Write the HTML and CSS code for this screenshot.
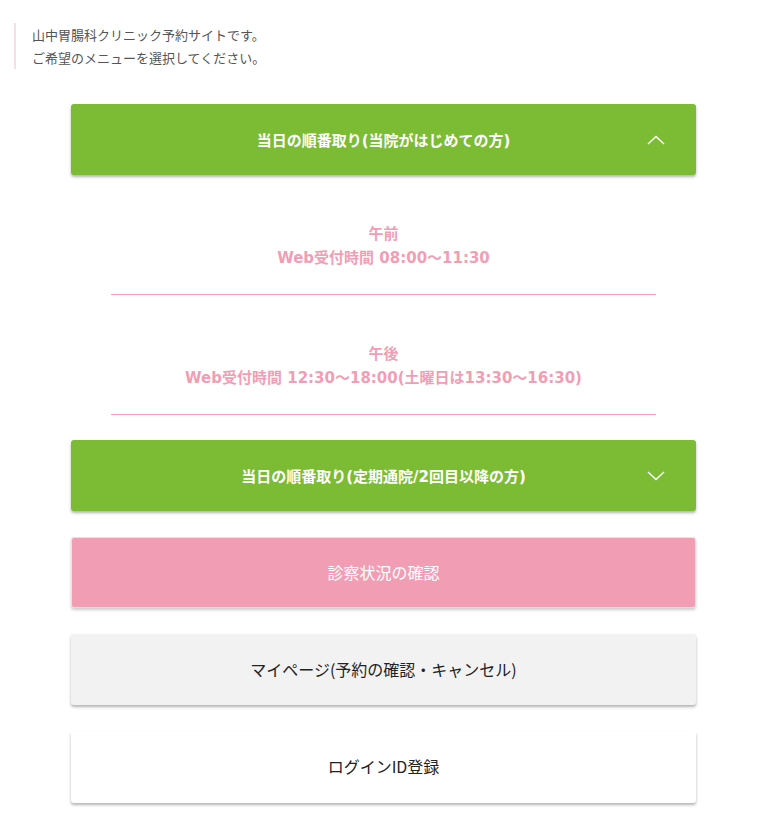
FILE: index.html
```html
<!DOCTYPE html>
<html lang="ja">
<head>
<meta charset="utf-8">
<title>山中胃腸科クリニック予約サイト</title>
<link rel="stylesheet" href="styles.css">
</head>
<body>
<div class="intro">
  <p>山中胃腸科クリニック予約サイトです。</p>
  <p>ご希望のメニューを選択してください。</p>
</div>
<div class="menu">
  <div class="acc-head">
    <span class="acc-title">当日の順番取り(当院がはじめての方)</span>
    <svg class="chev" width="18" height="10" viewBox="0 0 18 10"><polyline points="1,9 9,1.5 17,9" fill="none" stroke="#fff" stroke-width="1.4"/></svg>
  </div>
  <div class="acc-body">
    <div class="slot">
      <p>午前</p>
      <p>Web受付時間 08:00〜11:30</p>
    </div>
    <div class="slot">
      <p>午後</p>
      <p>Web受付時間 12:30〜18:00(土曜日は13:30〜16:30)</p>
    </div>
  </div>
  <div class="acc-head">
    <span class="acc-title">当日の順番取り(定期通院/2回目以降の方)</span>
    <svg class="chev" width="18" height="10" viewBox="0 0 18 10"><polyline points="1,1 9,8.5 17,1" fill="none" stroke="#fff" stroke-width="1.4"/></svg>
  </div>
  <div class="btn btn-pink">診察状況の確認</div>
  <div class="btn btn-gray">マイページ(予約の確認・キャンセル)</div>
  <div class="btn btn-white">ログインID登録</div>
</div>
</body>
</html>
```
FILE: styles.css
```css
* { box-sizing: border-box; }
body {
  margin: 0;
  background: #fff;
  font-family: "Noto Sans CJK JP", "Noto Sans", sans-serif;
  color: #333;
}
p { margin: 0; }
.intro {
  margin: 23px 0 0 14px;
  padding-left: 16px;
  border-left: 2px solid #f5dee7;
  font-size: 13px;
  line-height: 23px;
  color: #555;
}
.intro p { height: 23px; }
.menu {
  margin: 35px 0 30px 71px;
  width: 625px;
  display: flex;
  flex-direction: column;
}
.acc-head {
  position: relative;
  height: 71px;
  padding-bottom: 1px;
  background: #7cbc35;
  border-radius: 3px;
  box-shadow: 0 2px 3px rgba(0,0,0,0.3);
  display: flex;
  align-items: center;
  justify-content: center;
  color: #fff;
  font-family: "DejaVu Sans", "Noto Sans CJK JP", sans-serif;
  font-weight: bold;
  font-size: 15px;
}
.chev {
  position: absolute;
  right: 31px;
  top: 31px;
}
.acc-body {
  padding: 0 40px 25px;
}
.slot {
  padding: 47px 0 24px;
  border-bottom: 1px solid #f19eb5;
  text-align: center;
  color: #f19eb5;
  font-family: "DejaVu Sans", "Noto Sans CJK JP", sans-serif;
  font-weight: bold;
  font-size: 15px;
  line-height: 24px;
}
.slot p { height: 24px; }
.btn {
  height: 71px;
  margin-top: 26px;
  padding-bottom: 2px;
  border-radius: 3px;
  display: flex;
  align-items: center;
  justify-content: center;
  font-size: 16px;
  box-shadow: 0 2px 3px rgba(0,0,0,0.3);
}
.btn-pink {
  background: #f19eb5;
  color: #fff;
  border: 1px solid #e4e4e4;
  box-shadow: 0 2px 3px rgba(0,0,0,0.2);
}
.btn-gray {
  background: #f2f2f2;
  color: #222;
}
.btn-white {
  background: #fff;
  color: #222;
  height: 72px;
}
```
